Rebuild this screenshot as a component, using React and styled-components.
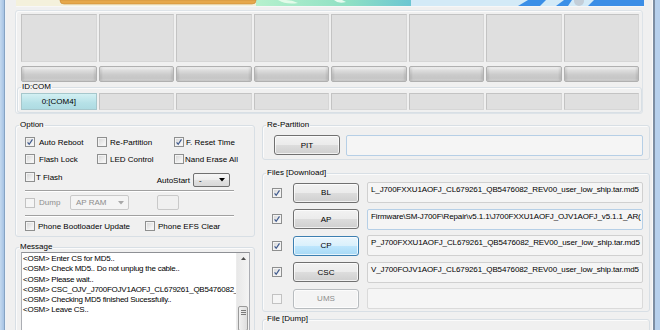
import React from "react";
import styled, { createGlobalStyle } from "styled-components";

const GlobalStyle = createGlobalStyle`
  html, body {
    margin: 0;
    padding: 0;
    background: #f0f0f0;
  }
  body {
    font-family: "Liberation Sans", Arial, sans-serif;
    font-size: 8px;
    color: #000;
  }
  * {
    box-sizing: border-box;
  }
`;

const MESSAGES = [
  "<OSM> Enter CS for MD5..",
  "<OSM> Check MD5.. Do not unplug the cable..",
  "<OSM> Please wait..",
  "<OSM> CSC_OJV_J700FOJV1AOFJ_CL679261_QB5476082_",
  "<OSM> Checking MD5 finished Sucessfully..",
  "<OSM> Leave CS..",
];

// the edit boxes are scrolled, so only the visible part of each path is kept
const FILES = [
  {
    name: "BL",
    checked: true,
    path: "L_J700FXXU1AOFJ_CL679261_QB5476082_REV00_user_low_ship.tar.md5",
  },
  {
    name: "AP",
    checked: true,
    path: "Firmware\\SM-J700F\\Repair\\v5.1.1\\J700FXXU1AOFJ_OJV1AOFJ_v5.1.1_AR(",
    blue: true,
  },
  {
    name: "CP",
    checked: true,
    active: true,
    path: "P_J700FXXU1AOFJ_CL679261_QB5476082_REV00_user_low_ship.tar.md5",
  },
  {
    name: "CSC",
    checked: true,
    path: "V_J700FOJV1AOFJ_CL679261_QB5476082_REV00_user_low_ship.tar.md5",
  },
  { name: "UMS", checked: false, disabled: true, path: "" },
];

function Check({ checked, disabled }) {
  return (
    <CheckBox $disabled={disabled}>
      {checked && (
        <svg width="8" height="8" viewBox="0 0 8 8">
          <path d="M1.6 4.3 L3.2 6.3 L6.5 1.3" fill="none" stroke="#3f5a8e" strokeWidth="1.2" />
        </svg>
      )}
    </CheckBox>
  );
}

function Arrow({ color = "#000" }) {
  return (
    <svg width="6" height="4" viewBox="0 0 6 4">
      <path d="M0 0 H6 L3 3.5 Z" fill={color} />
    </svg>
  );
}

function Banner() {
  return (
    <BannerBox>
      <svg width="628" height="7" viewBox="0 0 628 7">
        <defs>
          <linearGradient id="mint" x1="0" x2="1" y1="0" y2="0">
            <stop offset="0" stopColor="#b6f1cd" />
            <stop offset="0.6" stopColor="#8fe0c4" />
            <stop offset="1" stopColor="#6cc6d2" />
          </linearGradient>
        </defs>
        <rect x="0" y="0" width="628" height="7" fill="#d3eaf7" />
        <rect x="0" y="0" width="240" height="7" fill="#f4f1dc" />
        <rect x="240" y="0" width="155" height="7" fill="url(#mint)" />
        <path d="M44 0 H240 V0.5 Q240 4 236 4 H48 Q44 4 44 0.5 Z" fill="#e6a84b" stroke="#c98a36" strokeWidth="0.6" />
        <path d="M262 0 Q270 5 282 3 Q276 0 270 0 Z" fill="#e2fbe9" />
        <path d="M318 0 Q322 4 330 2 L326 0 Z" fill="#e6fbef" />
        <path d="M502 6 L512 0 H530 L524 6 Z" fill="#3b8fe7" />
        <path d="M540 6 L548 0 H556 L552 6 Z" fill="#3b8fe7" />
        <circle cx="563" cy="1" r="5" fill="#c3ced8" />
        <path d="M572 6 L578 0 H628 V6 Z" fill="#3c8ee6" />
        <rect x="0" y="6" width="628" height="1" fill="#f7f7f7" />
      </svg>
    </BannerBox>
  );
}

export default function App() {
  return (
    <>
      <GlobalStyle />
      <Window>
        <FrameLeft />
        <Client>
          <Banner />
          <TopGroup>
            <StatusGrid>
              {Array.from({ length: 8 }).map((_, i) => (
                <StatusCell key={i} />
              ))}
            </StatusGrid>
            <ProgressGrid>
              {Array.from({ length: 8 }).map((_, i) => (
                <ProgressBar key={i} />
              ))}
            </ProgressGrid>
            <Group>
              <Legend>ID:COM</Legend>
              <IdComGrid>
                {Array.from({ length: 8 }).map((_, i) => (
                  <ComCell key={i} $active={i === 0}>
                    {i === 0 ? "0:[COM4]" : ""}
                  </ComCell>
                ))}
              </IdComGrid>
            </Group>
          </TopGroup>

          <Lower>
            <LeftColumn>
              <Group>
                <Legend>Option</Legend>
                <OptionBody>
                  <OptionRow>
                    <CheckItem $gap={4}>
                      <Check checked />
                      Auto Reboot
                    </CheckItem>
                    <CheckItem>
                      <Check />
                      Re-Partition
                    </CheckItem>
                    <CheckItem $gap={2}>
                      <Check checked />
                      F. Reset Time
                    </CheckItem>
                  </OptionRow>
                  <OptionRow>
                    <CheckItem $gap={4}>
                      <Check />
                      Flash Lock
                    </CheckItem>
                    <CheckItem>
                      <Check />
                      LED Control
                    </CheckItem>
                    <CheckItem $gap={1}>
                      <Check />
                      Nand Erase All
                    </CheckItem>
                  </OptionRow>
                  <AutoRow>
                    <CheckItem $gap={1}>
                      <Check />
                      T Flash
                    </CheckItem>
                    <AutoStart>
                      AutoStart
                      <Combo $w={37}>
                        -
                        <Arrow />
                      </Combo>
                    </AutoStart>
                  </AutoRow>
                  <Separator />
                  <DumpRow>
                    <CheckItem $gap={4} $w={45} $disabled>
                      <Check disabled />
                      Dump
                    </CheckItem>
                    <Combo $w={59} $h={15} $disabled>
                      AP RAM
                      <Arrow color="#a8a8a8" />
                    </Combo>
                    <SmallBox />
                  </DumpRow>
                  <Separator $top={4} />
                  <PhoneRow>
                    <CheckItem $gap={3} $w={120}>
                      <Check />
                      Phone Bootloader Update
                    </CheckItem>
                    <CheckItem $gap={3}>
                      <Check />
                      Phone EFS Clear
                    </CheckItem>
                  </PhoneRow>
                </OptionBody>
              </Group>

              <Group>
                <Legend>Message</Legend>
                <MessageBody>
                  <MessageBox>
                    <MessageText>
                      {MESSAGES.map((m) => (
                        <MessageLine key={m}>{m}</MessageLine>
                      ))}
                    </MessageText>
                    <ScrollBar>
                      <ScrollUp>
                        <svg width="5" height="3" viewBox="0 0 5 3">
                          <path d="M0 3 L2.5 0 L5 3 Z" fill="#4d4d4d" />
                        </svg>
                      </ScrollUp>
                      <ScrollThumb>
                        <Grip />
                        <Grip />
                        <Grip />
                      </ScrollThumb>
                    </ScrollBar>
                  </MessageBox>
                </MessageBody>
              </Group>
            </LeftColumn>

            <RightColumn>
              <Group>
                <Legend>Re-Partition</Legend>
                <PartitionBody>
                  <Button>PIT</Button>
                  <Field $blue />
                </PartitionBody>
              </Group>

              <Group>
                <Legend>Files [Download]</Legend>
                <FilesBody>
                  {FILES.map((f) => (
                    <FileRow key={f.name}>
                      <Check checked={f.checked} disabled={f.disabled} />
                      <Button $active={f.active} $disabled={f.disabled}>
                        {f.name}
                      </Button>
                      <Field $blue={f.blue} $disabled={f.disabled}>
                        {f.path}
                      </Field>
                    </FileRow>
                  ))}
                </FilesBody>
              </Group>

              <Group>
                <Legend>File [Dump]</Legend>
                <DumpBody />
              </Group>
            </RightColumn>
          </Lower>
        </Client>
        <FrameRight />
      </Window>
    </>
  );
}

const Window = styled.div`
  width: 660px;
  height: 330px;
  overflow: hidden;
  display: flex;
  background: #f0f0f0;
`;

const FrameLeft = styled.div`
  width: 6px;
  flex: none;
  background: linear-gradient(90deg, #c4d9ef 0, #a6c3e4 4px, #86a3c3 4px, #86a3c3 5px, #eef3f8 5px);
`;

const FrameRight = styled.div`
  width: 8px;
  flex: none;
  background: linear-gradient(90deg, #fafafa 0, #fafafa 1px, #7d8ea3 1px, #7d8ea3 3px, #b7d0ec 3px);
`;

const Client = styled.div`
  flex: 1;
  min-width: 0;
  display: flex;
  flex-direction: column;
  padding: 0 2px 0 9px;
`;

const BannerBox = styled.div`
  height: 7px;
  margin: 0 6px 0 1px;
  display: flex;

  svg {
    display: block;
  }
`;

const TopGroup = styled.div`
  margin: 3px 7px 0 0;
  height: 110px;
  padding: 3px 0 0 1px;
  border: 1px solid #dde3e8;
  border-radius: 3px;
  box-shadow: inset 1px 1px 0 #fbfbfb;
  display: flex;
  flex-direction: column;
`;

const StatusGrid = styled.div`
  display: grid;
  grid-template-columns: repeat(8, 1fr);
  gap: 2px;
  height: 48px;
  margin: 0 3px 0 4px;
`;

const StatusCell = styled.div`
  background: #dfdfdf;
  border: 1px solid;
  border-color: #c3c3c3 #d6d6d6 #d6d6d6 #c3c3c3;
`;

const ProgressGrid = styled.div`
  display: grid;
  grid-template-columns: repeat(8, 1fr);
  gap: 2px;
  height: 16px;
  margin: 4px 3px 0 4px;
`;

const ProgressBar = styled.div`
  border: 1px solid #b0b0b0;
  border-radius: 2px;
  background: linear-gradient(#f4f4f4 0%, #dedede 22%, #cbcbcb 55%, #c6c6c6 80%, #d2d2d2 100%);
  box-shadow: inset 2px 0 2px rgba(0, 0, 0, 0.07), inset -2px 0 2px rgba(0, 0, 0, 0.07);
`;

const Group = styled.fieldset`
  margin: 0;
  padding: 0;
  min-width: 0;
  border: 1px solid #d8dfe5;
  border-radius: 3px;
  box-shadow: inset 1px 1px 0 #fbfbfb;
`;

const Legend = styled.legend`
  margin-left: 3px;
  padding: 0 1px;
  font-size: 8px;
  line-height: 10px;
  color: #000;
`;

const IdComGrid = styled.div`
  display: grid;
  grid-template-columns: repeat(8, 1fr);
  gap: 2px;
  height: 17px;
  margin: 1px 2px 2px 3px;
`;

const ComCell = styled.div`
  display: flex;
  align-items: center;
  justify-content: center;
  background: ${(p) => (p.$active ? "linear-gradient(#d3f0f3, #b6e1e7 60%, #aedbe2)" : "#dfdfdf")};
  border: 1px solid;
  border-color: ${(p) => (p.$active ? "#a6c7cc" : "#c3c3c3 #d6d6d6 #d6d6d6 #c3c3c3")};
`;

const Lower = styled.div`
  display: grid;
  grid-template-columns: 240px 388px;
  column-gap: 7px;
  margin-top: 6px;
  align-items: start;
`;

const LeftColumn = styled.div`
  display: flex;
  flex-direction: column;
  gap: 5px;
`;

const RightColumn = styled.div`
  display: flex;
  flex-direction: column;
  gap: 8px;

  & > fieldset:last-child {
    margin-top: -6px;
  }
`;

const OptionBody = styled.div`
  padding: 5px 0 3px 9px;
  display: flex;
  flex-direction: column;
`;

const OptionRow = styled.div`
  display: grid;
  grid-template-columns: 72px 77px 1fr;
  height: 14px;
  align-items: center;
  margin-bottom: 3px;
`;

const CheckItem = styled.div`
  display: flex;
  align-items: center;
  gap: ${(p) => (p.$gap !== undefined ? p.$gap : 3)}px;
  height: 14px;
  white-space: nowrap;
  width: ${(p) => (p.$w ? `${p.$w}px` : "auto")};
  flex: none;
  color: ${(p) => (p.$disabled ? "#8d8d8d" : "#000")};
`;

const CheckBox = styled.span`
  width: 10px;
  height: 10px;
  flex: none;
  display: flex;
  align-items: center;
  justify-content: center;
  border: 1px solid ${(p) => (p.$disabled ? "#c2c2c2" : "#8e8f8f")};
  background: ${(p) => (p.$disabled ? "#f5f5f5" : "linear-gradient(135deg, #d4d4d4 0%, #f8f8f8 85%)")};
  box-shadow: inset 0 0 0 1px ${(p) => (p.$disabled ? "#f5f5f5" : "#f3f3f3")};
`;

const AutoRow = styled.div`
  display: flex;
  justify-content: space-between;
  align-items: flex-start;
  height: 17px;
  padding-right: 24px;
  margin-top: 1px;
`;

const AutoStart = styled.div`
  display: flex;
  align-items: center;
  gap: 3px;
  margin-top: 3px;
`;

const Combo = styled.div`
  width: ${(p) => p.$w}px;
  height: ${(p) => p.$h || 14}px;
  display: flex;
  align-items: center;
  justify-content: space-between;
  padding: 0 4px 0 5px;
  border: 1px solid ${(p) => (p.$disabled ? "#c9c9c9" : "#707070")};
  border-radius: 2px;
  background: ${(p) => (p.$disabled ? "#f4f4f4" : "linear-gradient(#f6f6f6, #ededed 50%, #e2e2e2 50%, #d8d8d8)")};
  color: ${(p) => (p.$disabled ? "#8d8d8d" : "#000")};
`;

const Separator = styled.div`
  width: 209px;
  height: 2px;
  margin-top: ${(p) => p.$top || 3}px;
  border-top: 1px solid #a0a0a0;
  border-bottom: 1px solid #ffffff;
`;

const DumpRow = styled.div`
  display: flex;
  align-items: center;
  height: 17px;
  margin-top: 2px;
`;

const SmallBox = styled.div`
  width: 22px;
  height: 15px;
  margin-left: 28px;
  border: 1px solid #c9c9c9;
  border-radius: 2px;
  background: #f0f0f0;
`;

const PhoneRow = styled.div`
  display: flex;
  align-items: center;
  height: 14px;
  margin-top: 2px;
`;

const MessageBody = styled.div`
  padding: 0 4px 0 5px;
`;

const MessageBox = styled.div`
  height: 80px;
  display: flex;
  border: 1px solid #abadb3;
  border-top-color: #8e9095;
  background: #fff;
`;

const MessageText = styled.div`
  flex: 1;
  min-width: 0;
  overflow: hidden;
  padding: 1px 0 0 1px;
  letter-spacing: -0.25px;
`;

const MessageLine = styled.div`
  white-space: nowrap;
  line-height: 10.3px;
  height: 10.3px;
`;

const ScrollBar = styled.div`
  width: 13px;
  flex: none;
  display: flex;
  flex-direction: column;
  align-items: center;
  background: linear-gradient(90deg, #e8e8e8, #f4f4f4);
  border-left: 1px solid #ececec;
`;

const ScrollUp = styled.div`
  height: 13px;
  width: 100%;
  display: flex;
  align-items: center;
  justify-content: center;
`;

const ScrollThumb = styled.div`
  margin-top: 43px;
  width: 10px;
  height: 30px;
  border: 1px solid #9a9a9a;
  border-radius: 2px;
  background: linear-gradient(90deg, #f1f1f1, #dedede);
  display: flex;
  flex-direction: column;
  align-items: center;
  padding-top: 3px;
  gap: 1px;
`;

const Grip = styled.div`
  width: 5px;
  height: 1px;
  background: #7a7a7a;
`;

const PartitionBody = styled.div`
  display: flex;
  gap: 6px;
  height: 20px;
  margin: 5px 6px 4px 11px;
`;

const Button = styled.div`
  width: 66px;
  height: 20px;
  flex: none;
  display: flex;
  align-items: center;
  justify-content: center;
  border: 1px solid ${(p) => (p.$active ? "#3c7fb1" : p.$disabled ? "#b8bcbf" : "#707070")};
  border-radius: 3px;
  background: ${(p) =>
    p.$active
      ? "linear-gradient(#eaf6fd, #d9f0fc 50%, #bee6fd 50%, #a7d9f5)"
      : p.$disabled
      ? "#f4f4f4"
      : "linear-gradient(#f2f2f2, #ebebeb 50%, #dddddd 50%, #cfcfcf)"};
  box-shadow: inset 0 0 0 1px rgba(255, 255, 255, 0.7);
  color: ${(p) => (p.$disabled ? "#8d8d8d" : "#000")};
`;

const Field = styled.div`
  flex: 1;
  min-width: 0;
  height: 21px;
  overflow: hidden;
  white-space: nowrap;
  padding: 2px 2px 0 3px;
  border: 1px solid ${(p) => (p.$blue ? "#b6cfe6" : p.$disabled ? "#dadada" : "#d0d0d0")};
  border-radius: 2px;
  background: #f5f5f5;
  line-height: 10px;
  letter-spacing: -0.12px;
`;

const FilesBody = styled.div`
  display: flex;
  flex-direction: column;
  gap: 5.5px;
  padding: 4px 6px 2px 9px;
`;

const FileRow = styled.div`
  display: flex;
  align-items: center;
  height: 21px;

  & > span:first-child {
    margin-right: 11px;
  }

  & > div:nth-child(2) {
    margin-right: 8px;
  }
`;

const DumpBody = styled.div`
  height: 20px;
`;
